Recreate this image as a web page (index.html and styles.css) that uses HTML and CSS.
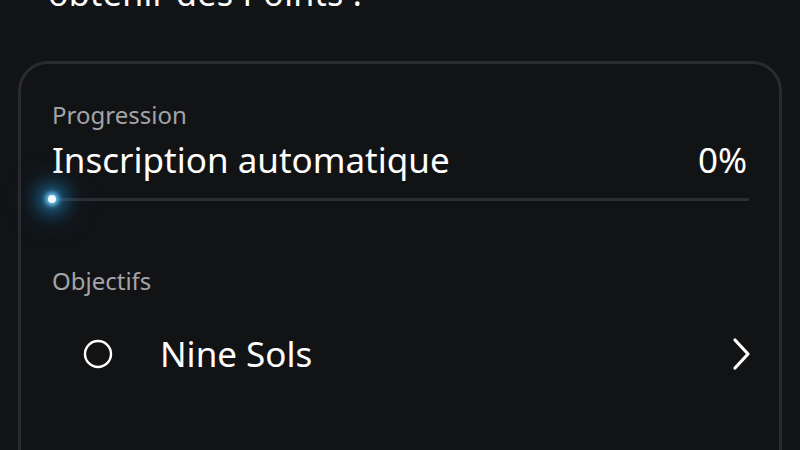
FILE: index.html
```html
<!DOCTYPE html>
<html>
	<head>
		<title>Progression</title>
		<meta charset="UTF-8">
		<link rel="stylesheet" href="styles.css">
	</head>
	<body>
		<div class="page">
			<h2 class="heading">obtenir des Points :</h2>
			<div class="card">
				<div class="label">Progression</div>
				<div class="progress-row">
					<span class="progress-name">Inscription automatique</span>
					<span class="progress-value">0%</span>
				</div>
				<div class="track">
					<div class="dot"></div>
				</div>
				<div class="label objectives">Objectifs</div>
				<div class="goal">
					<svg class="goal-icon" width="30" height="30" viewBox="0 0 30 30"><circle cx="15" cy="15" r="13" fill="none" stroke="#fff" stroke-width="2.4"/></svg>
					<span class="goal-name">Nine Sols</span>
					<svg class="chevron" width="22" height="34" viewBox="0 0 22 34"><path d="M4 3 L17 17 L4 31" fill="none" stroke="#fff" stroke-width="3.2" stroke-linecap="round" stroke-linejoin="round"/></svg>
				</div>
			</div>
		</div>
	</body>
</html>
```
FILE: styles.css
```css
body {
	margin: 0;
	background-color: #121315;
	color: #fff;
	font-family: "Noto Sans", "Open Sans", sans-serif;
	overflow: hidden;
}

.page {
	height: 450px;
	padding-top: 1px;
	box-sizing: border-box;
	overflow: hidden;
}

.heading {
	font-size: 34px;
	font-weight: 400;
	line-height: 40px;
	margin: -28px 0 0 48px;
	letter-spacing: 0.3px;
}

.card {
	margin: 48px 18px 0 18px;
	border: 3px solid #2a2b2e;
	border-bottom: none;
	border-radius: 30px 30px 0 0;
	padding: 36px 30px 0 31px;
	height: 360px;
}

.label {
	color: #a3a4a8;
	font-size: 24px;
	line-height: 30px;
}

.progress-row {
	display: flex;
	justify-content: space-between;
	align-items: baseline;
	margin-top: 8px;
	font-size: 35px;
	line-height: 44px;
}

.progress-value {
	margin-right: 2px;
}

.track {
	position: relative;
	height: 3px;
	background-color: #2c2d31;
	margin-top: 16px;
}

.dot {
	position: absolute;
	left: -4px;
	top: -3px;
	width: 8px;
	height: 8px;
	border-radius: 50%;
	background-color: #f2faff;
	box-shadow: 0 0 4px 3px rgba(110, 200, 245, 0.9), 0 0 16px 9px rgba(40, 150, 210, 0.55), 0 0 28px 16px rgba(20, 110, 170, 0.3);
}

.objectives {
	margin-top: 65px;
}

.goal {
	display: flex;
	align-items: center;
	margin-top: 36px;
	padding-left: 31px;
	line-height: 44px;
}

.goal-icon {
	flex: none;
}

.goal-name {
	font-size: 35px;
	margin-left: 47px;
	flex: 1;
}

.chevron {
	flex: none;
	margin-right: -4px;
}
```
